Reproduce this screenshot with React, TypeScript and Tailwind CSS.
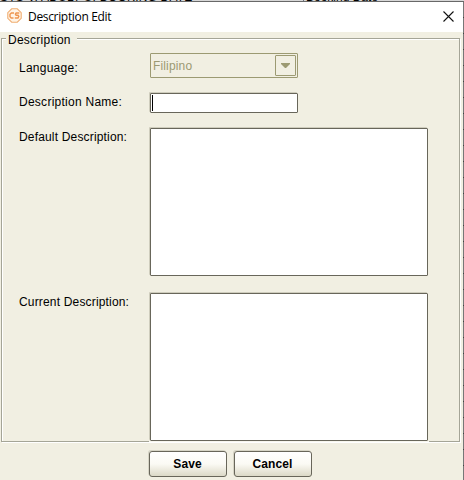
import React from "react";

const label = "flex w-[130px] shrink-0 pl-[17px] text-[12px] leading-[14px] whitespace-nowrap";
const field =
  "border border-[#68665a] bg-white rounded-[1px] shadow-[-1px_-1px_0_#cfcdbd]";

function PushButton({ children }: { children: React.ReactNode }) {
  return (
    <button className="h-[26px] w-[78px] rounded-[3px] border border-[#68665a] bg-linear-to-b from-white via-[#fbfaf4] to-[#dcd9c7] pr-px text-center text-[12px] leading-[24px] font-bold tracking-[0.1px] text-black shadow-[-1px_-1px_0_#d6d4c5]">
      {children}
    </button>
  );
}

function Logo() {
  return (
    <svg width="15" height="15" viewBox="0 0 15 15" className="mt-[6px] ml-[7px] shrink-0">
      <path
        d="M4.7.8h5.6l3.9 3.9v5.6l-3.9 3.9H4.7L.8 10.3V4.7z"
        fill="#fff4e6"
        stroke="#f0ad72"
        strokeWidth="1.1"
      />
      <path
        d="M7 5H4.4L3 6.3v2.5L4.2 10h2.3M12.3 5H9.2L8.4 6.1l.7 1.2h2l.7 1-.8 1.7H7.8"
        fill="none"
        stroke="#ee9650"
        strokeWidth="1.4"
      />
    </svg>
  );
}

export default function App() {
  return (
    <div className="flex h-[480px] w-[464px] flex-col overflow-hidden bg-[#f1efe2] font-['Liberation_Sans',Arial,sans-serif] text-black">
      <div className="flex h-[2px] shrink-0 overflow-hidden border-b border-[#686868] bg-[#d7d7d7] text-[12px] leading-[12px] whitespace-nowrap">
        <span className="-mt-[9px] w-[303px] shrink-0 tracking-[0.2px]">STS V. ADULT U. BOOKING DATE</span>
        <span className="-mt-[9px] border-l border-gray-500 pl-[2px]">Booking Date</span>
      </div>
      <div className="flex min-h-0 flex-1">
        <main className="flex w-[463px] flex-col">
          <header className="flex h-[30px] shrink-0 bg-white">
            <Logo />
            <h1 className="mt-[7px] ml-[6px] flex-1 font-['Open_Sans','Noto_Sans',sans-serif] text-[12px] leading-[16px] tracking-[-0.33px]">
              Description Edit
            </h1>
            <svg width="11" height="11" viewBox="0 0 11 11" className="mt-[9px] mr-[9px]">
              <path d="M.5.5l10 10M10.5.5l-10 10" stroke="#111" strokeWidth="1.1" />
            </svg>
          </header>

          <section className="mt-[6px] ml-px flex h-[404px] w-[459px] shrink-0 flex-col border border-[#a5a597] shadow-[1px_1px_0_#fff,inset_1px_1px_0_#fff]">
            <h2 className="-mt-[6px] ml-[4px] h-[14px] w-[71px] shrink-0 bg-[#f1efe2] pl-[2px] text-[12px] leading-[14px] tracking-[0.25px]">
              Description
            </h2>
            <div className="mt-[6px] flex h-[25px] w-[296px] shrink-0">
              <div className={label + " pt-[8px] tracking-[0.25px]"}>Language:</div>
              <div className="ml-[18px] flex h-[25px] w-[148px] shrink-0 rounded-[1px] border border-[#9c9a72] p-px text-[#9c9a72]">
                <span className="flex-1 pt-[4px] pl-px text-[12px] leading-[14px] tracking-[0.15px]">Filipino</span>
                <span className="flex h-[21px] w-[21px] items-center justify-center rounded-[1px] border border-[#9c9a72]">
                  <svg width="9" height="5" viewBox="0 0 9 5">
                    <path d="M0 0h9v1L5 5H4L0 1z" fill="#9c9a72" />
                  </svg>
                </span>
              </div>
            </div>
            <div className="mt-[15px] flex h-[20px] shrink-0">
              <div className={label + " pt-[2px] tracking-[0.26px]"}>Description Name:</div>
              <div className={field + " ml-[18px] h-[20px] w-[148px] pt-px pl-px"}>
                <div className="h-[16px] w-px bg-black" />
              </div>
            </div>
            <div className="mt-[15px] flex h-[148px] shrink-0">
              <div className={label + " pt-[2px] tracking-[0.17px]"}>Default Description:</div>
              <div className={field + " ml-[18px] h-[148px] w-[278px]"} />
            </div>
            <div className="mt-[17px] flex h-[148px] shrink-0">
              <div className={label + " pt-[2px] tracking-[0.17px]"}>Current Description:</div>
              <div className={field + " relative ml-[18px] h-[148px] w-[278px] after:absolute after:top-[147px] after:-left-[2px] after:h-px after:w-[280px] after:bg-[#f8f7ee]"} />
            </div>
          </section>

          <footer className="mt-[9px] ml-[149px] flex gap-[7px]">
            <PushButton>Save</PushButton>
            <PushButton>Cancel</PushButton>
          </footer>
        </main>
        <aside className="w-px bg-[repeating-linear-gradient(to_bottom,#777_0_15px,#444_15px_16px)]" />
      </div>
    </div>
  );
}
